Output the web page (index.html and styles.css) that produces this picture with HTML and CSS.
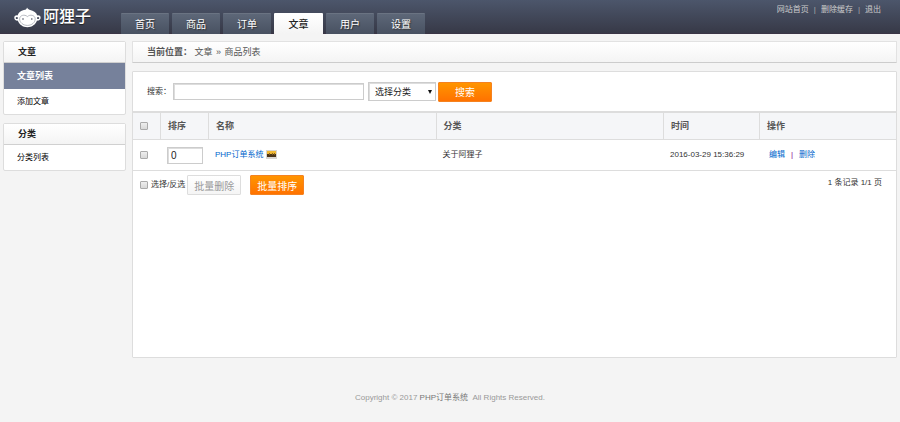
FILE: index.html
```html
<!DOCTYPE html>
<html lang="zh-CN">
<head>
    <meta charset="UTF-8">
    <meta name="viewport" content="width=device-width, initial-scale=1.0">
    <title>商品列表</title>
    <link rel="stylesheet" href="styles.css">
</head>
<body>
    <!-- Header -->
    <header class="header">
        <a class="logo" href="#">
            <svg class="logo-icon" viewBox="0 0 27 21" aria-hidden="true">
                <path d="M13 0.5 C13.6 1.4 14.2 2.2 15.4 2.8 C20 3.6 22.6 6 23.2 8.4 C25.6 8 27 9.4 26.6 11.2 C26.2 12.9 24.8 13.8 23 13.6 C21.6 17.6 18 20.3 13.4 20.3 C8.8 20.3 5.2 17.6 3.8 13.6 C2 13.8 0.6 12.9 0.3 11.2 C0 9.4 1.4 8 3.7 8.4 C4.3 5.8 7 3.4 11.4 2.8 C12.4 2.2 12.8 1.4 13 0.5 Z" fill="#fff"/>
                <path d="M1.6 10.9 Q2 9.6 3.6 10 L3.8 12 Q2 12.4 1.6 10.9 Z M25.3 10.9 Q24.9 9.6 23.3 10 L23.1 12 Q24.9 12.4 25.3 10.9 Z" fill="#444a5b"/>
                <path d="M13.4 9.6 C10.6 7 5.8 8.2 5.6 11.8 C5.6 15.6 9.2 18.4 13.4 18.4 C17.6 18.4 21.2 15.6 21.2 11.8 C21 8.2 16.2 7 13.4 9.6 Z" fill="#fff" stroke="#8a8e9a" stroke-width="0.6"/>
                <circle cx="9" cy="12" r="0.8" fill="#444a5b"/>
                <circle cx="17.8" cy="12" r="0.8" fill="#444a5b"/>
            </svg>
            <span class="logo-text">阿狸子</span>
        </a>
        <nav class="tabs">
            <a class="tab" href="#">首页</a>
            <a class="tab" href="#">商品</a>
            <a class="tab" href="#">订单</a>
            <a class="tab active" href="#">文章</a>
            <a class="tab" href="#">用户</a>
            <a class="tab" href="#">设置</a>
        </nav>
        <div class="top-links">
            <a href="#">网站首页</a>
            <span>|</span>
            <a href="#">删除缓存</a>
            <span>|</span>
            <a href="#">退出</a>
        </div>
    </header>

    <div class="layout">
        <!-- Sidebar -->
        <aside class="sidebar">
            <div class="menu">
                <h2>文章</h2>
                <a class="active" href="#">文章列表</a>
                <a href="#">添加文章</a>
            </div>
            <div class="menu">
                <h2>分类</h2>
                <a href="#">分类列表</a>
            </div>
        </aside>

        <!-- Content -->
        <main class="main">
            <div class="breadcrumb"><strong>当前位置：</strong> 文章 <span class="arrow">»</span> 商品列表</div>

            <div class="panel">
                <form class="search">
                    <label for="keyword">搜索：</label>
                    <input class="field keyword" type="text" id="keyword">
                    <div class="select-wrap">
                        <select class="field" id="category" aria-label="选择分类">
                            <option>选择分类</option>
                        </select>
                    </div>
                    <button class="btn btn-orange" type="button">搜索</button>
                </form>

                <table class="list">
                    <colgroup>
                        <col class="col-check">
                        <col class="col-sort">
                        <col class="col-name">
                        <col class="col-category">
                        <col class="col-time">
                        <col class="col-action">
                    </colgroup>
                    <thead>
                        <tr>
                            <th><input class="check" type="checkbox" aria-label="全选"></th>
                            <th>排序</th>
                            <th>名称</th>
                            <th>分类</th>
                            <th>时间</th>
                            <th>操作</th>
                        </tr>
                    </thead>
                    <tbody>
                        <tr>
                            <td><input class="check" type="checkbox" aria-label="选择"></td>
                            <td><input class="field sort" type="text" value="0" aria-label="排序"></td>
                            <td>
                                <a href="#">PHP订单系统</a>
                                <svg class="pic" viewBox="0 0 11 9" aria-hidden="true">
                                    <rect width="11" height="9" fill="#d8d5d0"/>
                                    <rect x="1" y="1" width="9" height="3" fill="#f0b832"/>
                                    <rect x="1" y="4" width="9" height="3" fill="#4a3418"/>
                                    <path d="M3.5 3 v2 M6.5 3 v2 M8.5 3 v2" stroke="#8a6420" stroke-width="1"/>
                                </svg>
                            </td>
                            <td>关于阿狸子</td>
                            <td>2016-03-29 15:36:29</td>
                            <td class="actions"><a href="#">编辑</a><span>|</span><a href="#">删除</a></td>
                        </tr>
                    </tbody>
                </table>

                <div class="toolbar">
                    <input class="check" type="checkbox" id="toggleAll">
                    <label for="toggleAll">选择/反选</label>
                    <button class="btn btn-gray" type="button">批量删除</button>
                    <button class="btn btn-orange" type="button">批量排序</button>
                    <div class="pager">1 条记录 1/1 页</div>
                </div>
            </div>
        </main>
    </div>

    <footer class="footer">Copyright © 2017 <a href="#">PHP订单系统</a>&nbsp; All Rights Reserved.</footer>
</body>
</html>
```

FILE: styles.css
```css
* {
    box-sizing: border-box;
}

body {
    margin: 0;
    font-family: "Liberation Sans", "Noto Sans CJK SC", sans-serif;
    font-size: 8px;
    line-height: 16px;
    color: #333;
    background-color: #f4f4f4;
}

a {
    color: #06c;
    text-decoration: none;
}

input, select, button {
    margin: 0;
    font-family: inherit;
}

/* Header */
.header {
    display: flex;
    height: 34px;
    background: linear-gradient(#4c566b, #373947);
    border-bottom: 1px solid #3a3445;
}

.logo {
    display: flex;
    align-items: center;
    width: 121px;
    padding: 1px 0 0 14px;
    color: #fff;
}

.logo-icon {
    width: 27px;
    height: 21px;
}

.logo-text {
    margin-left: 2px;
    font-size: 16px;
    font-weight: 500;
    text-shadow: 0 1px 1px #222;
}

.tabs {
    display: flex;
    align-items: flex-end;
    gap: 3px;
    margin-bottom: -1px;
}

.tab {
    width: 48px;
    height: 21px;
    font-size: 10px;
    line-height: 21px;
    text-align: center;
    color: #fff;
    background: linear-gradient(#5d6778, #485161);
    border-top: 1px solid #6a7382;
    border-radius: 1px 1px 0 0;
    text-shadow: 1px 1px 1px #333;
}

.tab.active {
    width: 49px;
    color: #222;
    font-weight: 500;
    background: linear-gradient(#fff, #f4f4f4);
    border-color: #fff;
    text-shadow: none;
}

.top-links {
    display: flex;
    gap: 5px;
    margin-left: auto;
    padding: 2px 19px 0 0;
    color: #aaa;
}

.top-links a {
    color: #ccc;
}

/* Layout */
.layout {
    display: flex;
    gap: 6px;
    padding: 7px 3px 0;
}

.sidebar {
    width: 123px;
}

.main {
    flex: 1;
}

.menu {
    margin-bottom: 8px;
    background-color: #fff;
    border: 1px solid #ddd;
    border-radius: 2px;
}

.menu h2 {
    margin: 0;
    padding-left: 14px;
    font-size: 9px;
    line-height: 20px;
    color: #222;
    background: linear-gradient(#fff, #f4f4f4);
    border-bottom: 1px solid #d0d0d0;
}

.menu a {
    display: block;
    padding-left: 13px;
    line-height: 25px;
    color: #000;
}

.menu a.active {
    font-size: 9px;
    line-height: 26px;
    font-weight: bold;
    color: #fff;
    background-color: #76819b;
}

.breadcrumb {
    margin-bottom: 8px;
    padding-left: 14px;
    font-size: 9px;
    line-height: 20px;
    color: #555;
    background: linear-gradient(#fff, #f4f4f4);
    border: 1px solid #e2e2e2;
    border-bottom-color: #ccc;
    border-radius: 1px;
}

.arrow {
    margin: 0 1px;
    font-size: 9px;
}

.panel {
    min-height: 287px;
    background-color: #fff;
    border: 1px solid #ddd;
    border-radius: 1px;
}

/* Form controls */
.field {
    padding: 0 3px;
    color: #222;
    background-color: #fff;
    border: 1px solid #ccc;
    border-radius: 0;
    box-shadow: inset 1px 1px 0 #ddd;
}

.check {
    appearance: none;
    display: block;
    width: 8px;
    height: 8px;
    background: linear-gradient(#eee, #d8d8d8);
    border: 1px solid #aaa;
    border-radius: 1px;
}

.btn {
    height: 20px;
    width: 54px;
    padding: 0;
    font-size: 10px;
    border: 1px solid #ddd;
    border-radius: 1px;
}

.btn-orange {
    color: #fff;
    background: linear-gradient(#ff9500, #ff7200);
    border-color: #f58220;
}

.btn-gray {
    color: #999;
    background: linear-gradient(#fff, #f5f5f5);
}

.search {
    display: flex;
    align-items: center;
    height: 39px;
    padding-left: 14px;
}

.keyword {
    width: 191px;
    height: 17px;
    margin: 0 4px 0 2px;
}

.select-wrap {
    position: relative;
    margin-right: 2px;
}

.select-wrap::after {
    content: "";
    position: absolute;
    top: 8px;
    right: 4px;
    border: 2px solid transparent;
    border-top: 4px solid #111;
    pointer-events: none;
}

.select-wrap .field {
    appearance: none;
    display: block;
    width: 68px;
    height: 19px;
    padding: 0 6px;
    font-size: 9px;
}

/* Table */
.list {
    width: 100%;
    table-layout: fixed;
    border-collapse: separate;
    border-spacing: 0;
}

.list th {
    height: 29px;
    padding: 0 7px;
    font-size: 9px;
    text-align: left;
    color: #555;
    background-color: #f5f6f8;
    border-top: 2px solid #ddd;
    border-bottom: 1px solid #ddd;
    border-right: 1px solid #ddd;
}

.list th:last-child {
    border-right: none;
}

.list td {
    height: 31px;
    padding: 0 6px;
    border-bottom: 1px solid #ddd;
}

.list td:first-child {
    padding-left: 7px;
}

.col-check {
    width: 28px;
}

.col-sort {
    width: 48px;
}

.col-time {
    width: 96px;
}

.col-action {
    width: 136px;
}

.list td.actions {
    padding-left: 9px;
}

.actions span {
    margin: 0 6px;
    color: #808;
}

.sort {
    display: block;
    width: 36px;
    height: 17px;
    font-size: 10px;
}

.pic {
    width: 11px;
    height: 9px;
    vertical-align: middle;
}

.toolbar {
    display: flex;
    align-items: center;
    padding: 4px 14px 4px 7px;
}

.toolbar label {
    margin: 0 2px 0 3px;
}

.toolbar .btn-orange {
    margin-left: 9px;
}

.pager {
    align-self: flex-start;
    margin-left: auto;
}

/* Footer */
.footer {
    padding: 32px 0 16px;
    text-align: center;
    color: #999;
}

.footer a {
    color: #777;
}
```
